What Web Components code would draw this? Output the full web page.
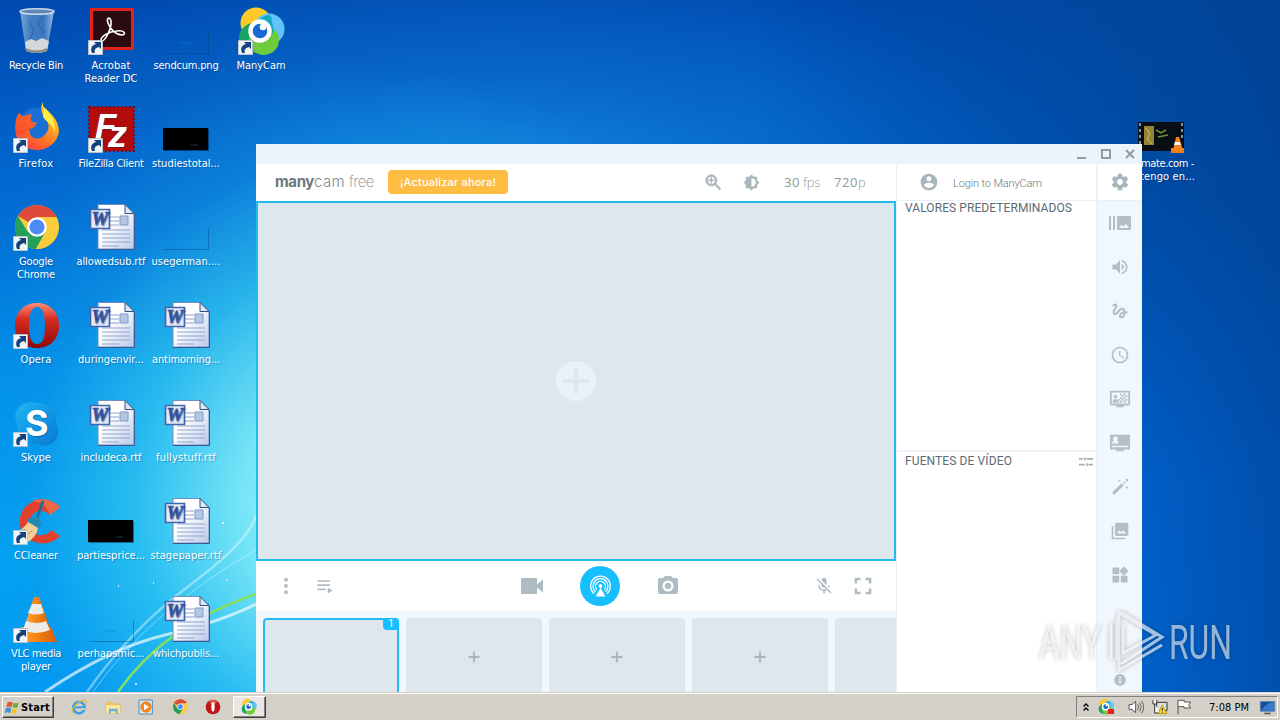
<!DOCTYPE html>
<html lang="es">
<head>
<meta charset="utf-8">
<title>ManyCam</title>
<style>
	body {
		margin: 0;
		width: 1280px;
		height: 720px;
		overflow: hidden;
		font: 11px "DejaVu Sans Condensed", "DejaVu Sans", sans-serif;
	}
</style>
</head>
<body>
<desk-top></desk-top>
<script>
const art = {
	recycle: `<defs><linearGradient id="g"><stop stop-color="#8fb5da"/><stop offset=".3" stop-color="#4f86c4"/><stop offset=".7" stop-color="#3f7cc4"/><stop offset="1" stop-color="#b4cfe8"/></linearGradient></defs>
		<path d="M8 3L14 43Q24 47 35 43L42 3Z" fill="url(#g)" opacity=".85"/>
		<path d="M13 34l6-3 5 2 6-3 7 3-2 10q-10 4-21 0z" fill="#d5d8da"/><path d="M14 40q10 5 21 0v3q-10 4-21 0z" fill="#8c8c87"/>
		<path d="M17 14l5 8-4 9M31 8l-5 9 6 7" stroke="#2f68b0" stroke-width="1.2" fill="none"/>
		<ellipse cx="25" cy="3.5" rx="17" ry="2.8" fill="#5c88b8" stroke="#cbd9e4" stroke-width="1.6"/>`,
	acrobat: `<path d="M3 0h44v42H3z" fill="#e2231a"/><path d="M6 3h38v36H6z" fill="#2b0a10"/>
		<path d="M14 33c4 1 11-13 10-20-1-5-5-3-3 2 2 6 8 12 14 12 5-1 2-5-5-4-6 0-17 5-16 10z" fill="none" stroke="#fff" stroke-width="1.600"/>`,
	manycam: `<circle cx="19" cy="15" r="15.5" fill="#ffca28"/><circle cx="32" cy="21" r="15.5" fill="#61c4fb"/><circle cx="17" cy="30" r="15" fill="#18a563"/><circle cx="27" cy="32" r="15" fill="#6ecb3e"/>
		<path d="M32 7a15 15 0 0 0-13 19l8 6 10-8-3-16z" fill="#16a9c4"/><circle cx="23" cy="23" r="9.5" fill="#1769d2" stroke="#fff" stroke-width="4.5"/><circle cx="26" cy="19" r="3.3" fill="#fff"/>`,
	firefox: `<defs><linearGradient id="g" x1=".2" y1="1" x2=".8" y2="0"><stop stop-color="#ff3b44"/><stop offset=".4" stop-color="#ff7b22"/><stop offset=".8" stop-color="#ffc52e"/><stop offset="1" stop-color="#ffe84a"/></linearGradient></defs>
		<circle cx="24" cy="20" r="18" fill="#1c6fd2"/><path d="M31 0c6 6 16 13 16 25a22 21 0 0 1-43 4C3 20 3 13 7 7l4 4c3-2 6-3 9-2-2 3-2 5 0 7l5 1-4 5-4 1c0 8 7 12 13 8 7-4 9-12 3-19-4-5-5-11-2-16z" fill="url(#g)"/><path d="M32 2c7 6 12 14 11 24-2-8-8-9-12-15z" fill="#fff143"/><path d="M7 7l4 4c3-2 6-3 9-2-2 3-2 5 0 7l5 1-4 5-4 1-4 6-9 0C3 20 3 13 7 7z" fill="#f8492d" opacity=".7"/>`,
	filezilla: `<path d="M2 1h45v44H2z" fill="#b30b0b" stroke="#7c0c1c" stroke-width="2" stroke-dasharray="2 2"/><text x="8" y="32" font-family="Liberation Sans" font-weight="bold" font-style="italic" font-size="35" fill="#fff">F</text><text x="21" y="41" font-family="Liberation Sans" font-weight="bold" font-style="italic" font-size="36" textLength="19" lengthAdjust="spacingAndGlyphs" fill="#fff">z</text>`,
	chrome: `<circle cx="25" cy="23" r="22" fill="#fbcd3a"/><path d="M25 23L5.9 12A22 22 0 0 1 44.1 12z" fill="#dd4b3c"/><path d="M25 13h19.5L41 8 25 1z" fill="#dd4b3c"/><path d="M5.9 12A22 22 0 0 0 24 45l9.5-17L16 28z" fill="#25a05b"/><path d="M33.5 28L24 45A22 22 0 0 0 44.1 13H25z" fill="#fbcd3a"/><circle cx="25" cy="23" r="8.7" fill="#4c8bf5" stroke="#fff" stroke-width="2.2"/>`,
	opera: `<defs><linearGradient id="g" x1="0" y1="0" x2="0" y2="1"><stop stop-color="#ff8d76"/><stop offset=".35" stop-color="#d92c22"/><stop offset="1" stop-color="#8d0806"/></linearGradient></defs><path fill-rule="evenodd" d="M25 1C11 1 3 11 3 24s9 22 22 22 22-9 22-22S39 1 25 1zm0 4c6 0 8 8 8 19s-2 18-8 18-8-7-8-18S19 5 25 5z" fill="url(#g)"/>`,
	skype: `<defs><linearGradient id="g" x2="1" y2="1"><stop stop-color="#20b6f5"/><stop offset="1" stop-color="#0878d2"/></linearGradient></defs><path d="M15 3c4-2 9 0 10 0 14 0 20 10 19 20 5 10 1 19-7 22-5 2-9 0-12-1-15 0-21-10-20-21C0 14 7 4 15 3z" fill="url(#g)"/><text x="13" y="36" font-family="Inter,Liberation Sans" font-weight="700" font-size="36" fill="#fff">S</text>`,
	ccleaner: `<path d="M48 9A23 22 0 1 0 48 38l-9-6a12 12 0 1 1-1-15z" fill="#e3412b"/><path d="M48 9c-7-7-18-10-28-6 8 0 14 4 18 14z" fill="#ee6748"/><path d="M31 3L25 20" stroke="#236d9c" stroke-width="3"/><path d="M16 21l9-3 5 7-4 6-10-4z" fill="#2589b6"/><path d="M16 24l10 6c-1 7-6 12-12 15L2 35c6-2 10-5 14-11z" fill="#f5cf94"/><path d="M7 35l6-4M12 40l8-7" stroke="#cb9054"/>`,
	vlc: `<defs><linearGradient id="g"><stop stop-color="#ffac42"/><stop offset=".5" stop-color="#f58312"/><stop offset="1" stop-color="#d85c05"/></linearGradient></defs><path d="M9 31h30l6 15H4z" fill="url(#g)"/><path d="M22 1h5l12 34q-14 7-28 0z" fill="url(#g)"/><path d="M20 8h9l3 9q-8 3-16 0zM14 25q11 4 20 0l4 9q-14 6-27 0z" fill="#ecebe8"/>`,
	word: `<defs><linearGradient id="g" x2="1" y2="1"><stop offset=".4" stop-color="#fff"/><stop offset="1" stop-color="#b9c9ea"/></linearGradient></defs><path d="M11 .5h27l9 9V45H11z" fill="url(#g)" stroke="#6f8dbf"/><path d="M38 .5v9h9z" fill="#dce6f5" stroke="#31527f"/><path d="M47.5 10v35.5H11" stroke="#3c5993" fill="none"/><path d="M23 13h9M23 17h9M23 21h9M15 26h28M15 30h28M15 34h28M15 38h28M15 42h17" stroke="#92a4cc"/><path d="M33 12h8v9h-8z" fill="#b4c6e2" stroke="#7d9cc6"/><path d="M3.5 5.5h19v19h-19z" fill="#e5ecf8" stroke="#4265ad" stroke-width="1.7"/><text x="4.5" y="21" font-family="Liberation Serif" font-weight="bold" font-style="italic" font-size="18" textLength="17" lengthAdjust="spacingAndGlyphs" fill="#3656a3" stroke="#3656a3" stroke-width=".6">W</text>`,
	black: `<path d="M1 22h45v22H1z" fill="#000"/><path d="M29 39h7" stroke="#123c50"/><path d="M2 44.5h44.5V23" stroke="#0006" fill="none"/>`,
	clear: `<path d="M2 45.5h44.5V24" stroke="#003b7066" fill="none"/><path d="M18 35h11" stroke="#0088c8" opacity=".6"/>`,
	film: `<path d="M1 16h46v29H1z" fill="#080e12"/><path d="M7 20h10v19H7z" fill="#918437"/><path d="M9 22l4 6-3 5 5 5" stroke="#d4bf58" fill="none"/><path d="M19 24l5 3 5-3M21 31l10-2" stroke="#718e35" stroke-width="1.5" fill="none"/><path d="M3 17v27M45 17v15" stroke="#7894aa" stroke-width="2" stroke-dasharray="3 3"/><path d="M34 42h13v5H34z" fill="#ef7d16"/><path d="M39 31h3l4 13H36z" fill="#f48620"/><path d="M38 36h5l1 3h-7z" fill="#fff"/>`,
	ie: `<ellipse cx="24" cy="26" rx="17" ry="17" fill="none" stroke="#3a9ee5" stroke-width="8"/><path d="M9 25h30" stroke="#3a9ee5" stroke-width="6"/><path d="M30 30h15" stroke="#d4d0c8" stroke-width="5"/><path d="M5 43C-5 33 27 0 43 5c5 3 2 10-1 14" fill="none" stroke="#e9b932" stroke-width="4"/>`,
	folder: `<path d="M4 8h15l4 5h19v13H4z" fill="#edc45b"/><path d="M2 17h44v26H2z" fill="#ffe79c" stroke="#cb9d37"/><path d="M12 43V29h26v14h-6v-6H18v6z" fill="#62b3dc"/>`,
	media: `<path d="M3 3h40v42H3z" fill="#d9edf7" stroke="#4b8cba" stroke-width="3"/><circle cx="24" cy="24" r="17" fill="#f4861b"/><path d="M18 14l15 10-15 10z" fill="#fff"/>`,
	operaSmall: `<circle cx="24" cy="24" r="22" fill="#bd1518"/><path d="M12 7q12-8 25 0l-6 8H17z" fill="#e15b4d"/><ellipse cx="24" cy="24" rx="5" ry="14" fill="#fff"/>`,
	windows: `<path d="M8 8q9-5 17 0l-4 15q-8-4-17 0z" fill="#e75720"/><path d="M28 9q8 4 16-1l-4 15q-8 4-16 0z" fill="#65ae3d"/><path d="M3 26q8-4 17 1l-4 15q-8-5-17 0z" fill="#3c8fda"/><path d="M23 27q9 4 16 0l-4 15q-8 4-16-1z" fill="#f6c42e"/>`,
	speaker: `<path d="M3 17h9L23 7v34L12 31H3z" fill="#fff" stroke="#555" stroke-width="3"/><path d="M29 16q6 8 0 17M35 11q9 13 0 27M41 6q12 18 0 37" fill="none" stroke="#666" stroke-width="3"/>`,
	network: `<path d="M14 10h31v25H14z" fill="#dce1e5" stroke="#333" stroke-width="3"/><path d="M3 3v12h11V3M8 15v27h18" fill="#fff" stroke="#333" stroke-width="3"/><path d="M31 18l14 26H18z" fill="#ffd92b" stroke="#9b7b00" stroke-width="2"/><path d="M31 27v8M31 38v3" stroke="#222" stroke-width="3"/>`,
	flag: `<path d="M6 46V4h19v5h19l-6 9 6 9H24v-4H6" fill="#fff" stroke="#555" stroke-width="3"/>`,
	screen: `<path d="M1 5h46v31H1z" fill="#174da0" stroke="#6088b2" stroke-width="3"/><path d="M3 34Q22 7 45 8v26z" fill="#3979cf"/><path d="M14 43h20" stroke="#555" stroke-width="5"/>`
};

const glyphs = {
	zoom: `<path d="M15.5 14h-.79l-.28-.27C15.41 12.59 16 11.11 16 9.5 16 5.91 13.09 3 9.5 3S3 5.91 3 9.5 5.91 16 9.5 16c1.61 0 3.09-.59 4.23-1.57l.27.28v.79l5 4.99L20.49 19zm-6 0C7.01 14 5 11.99 5 9.5S7.01 5 9.5 5 14 7.01 14 9.5 11.99 14 9.5 14z" stroke="currentColor" stroke-width=".6"/><path d="M13 10.3h-2.7V13H8.7v-2.7H6V8.7h2.7V6h1.6v2.7H13z"/>`,
	bright: `<path d="M20 15.31L23.31 12 20 8.69V4h-4.69L12 .69 8.69 4H4v4.69L.69 12 4 15.31V20h4.69L12 23.31 15.31 20H20zM12 18V6c3.31 0 6 2.69 6 6s-2.69 6-6 6z"/>`,
	account: `<path d="M12 2C6.48 2 2 6.48 2 12s4.48 10 10 10 10-4.48 10-10S17.52 2 12 2zm0 3c1.66 0 3 1.34 3 3s-1.34 3-3 3-3-1.34-3-3 1.34-3 3-3zm0 14.2c-2.5 0-4.71-1.28-6-3.22.03-1.99 4-3.08 6-3.08 1.99 0 5.97 1.09 6 3.08-1.29 1.94-3.5 3.22-6 3.22z"/>`,
	gear: `<path d="M19.43 12.98c.04-.32.07-.64.07-.98s-.03-.66-.07-.98l2.11-1.65c.19-.15.24-.42.12-.64l-2-3.46c-.12-.22-.39-.3-.61-.22l-2.49 1c-.52-.4-1.08-.73-1.69-.98l-.38-2.65C14.46 2.18 14.25 2 14 2h-4c-.25 0-.46.18-.49.42l-.38 2.65c-.61.25-1.17.59-1.69.98l-2.49-1c-.23-.09-.49 0-.61.22l-2 3.46c-.13.22-.07.49.12.64l2.11 1.65c-.04.32-.07.65-.07.98s.03.66.07.98l-2.11 1.65c-.19.15-.24.42-.12.64l2 3.46c.12.22.39.3.61.22l2.49-1c.52.4 1.08.73 1.69.98l.38 2.65c.03.24.24.42.49.42h4c.25 0 .46-.18.49-.42l.38-2.65c.61-.25 1.17-.59 1.69-.98l2.49 1c.23.09.49 0 .61-.22l2-3.46c.12-.22.07-.49-.12-.64zM12 15.5c-1.93 0-3.5-1.57-3.5-3.5s1.57-3.5 3.5-3.5 3.5 1.57 3.5 3.5-1.57 3.5-3.5 3.5z"/>`,
	burst: `<path d="M1 5h2v14H1zM5 5h2v14H5zM10 5h12q1 0 1 1v12q0 1-1 1H10q-1 0-1-1V6q0-1 1-1zm1 12h10l-3.2-4.3-2.5 3.1-1.7-2.1z" fill-rule="evenodd"/>`,
	volume: `<path d="M3 9v6h4l5 5V4L7 9zm13.5 3c0-1.77-1.02-3.29-2.5-4.03v8.05c1.48-.73 2.5-2.25 2.5-4.02zM14 3.23v2.06c2.89.86 5 3.54 5 6.71s-2.11 5.85-5 6.71v2.06c4.01-.91 7-4.49 7-8.77s-2.99-7.86-7-8.77z"/>`,
	gesture: `<path d="M4.59 6.89c.7-.71 1.4-1.35 1.71-1.22.5.2 0 1.03-.3 1.52-.25.42-2.86 3.89-2.86 6.31 0 1.28.48 2.34 1.34 2.98.75.56 1.74.73 2.64.46 1.07-.31 1.95-1.4 3.06-2.77 1.21-1.49 2.83-3.44 4.08-3.44 1.63 0 1.65 1.01 1.76 1.79-3.78.64-5.38 3.67-5.38 5.37 0 1.7 1.44 3.09 3.21 3.09 1.63 0 4.29-1.33 4.69-6.1H21v-2.5h-2.47c-.15-1.65-1.09-4.2-4.03-4.2-2.25 0-4.18 1.91-4.94 2.84-.58.73-2.06 2.48-2.29 2.72-.25.3-.68.84-1.11.84-.45 0-.72-.83-.36-1.92.35-1.09 1.4-2.86 1.85-3.52.78-1.14 1.3-1.92 1.3-3.28C8.95 3.69 7.31 3 6.44 3 5.12 3 3.97 4 3.72 4.25c-.36.36-.66.66-.88.93zm9.29 11.66c-.31 0-.74-.26-.74-.72 0-.6.73-2.2 2.87-2.76-.3 2.69-1.43 3.48-2.13 3.48z"/>`,
	clock: `<path d="M11.99 2C6.47 2 2 6.48 2 12s4.47 10 9.99 10C17.52 22 22 17.52 22 12S17.52 2 11.99 2zM12 20c-4.42 0-8-3.58-8-8s3.58-8 8-8 8 3.58 8 8-3.58 8-8 8zm.5-13H11v6l5.25 3.15.75-1.23-4.5-2.67z"/>`,
	chroma: `<path fill-rule="evenodd" d="M2 3h20q1 0 1 1v14q0 1-1 1h-6v2H8v-2H2q-1 0-1-1V4q0-1 1-1zm1 2v12h18V5z"/><circle cx="7" cy="9.5" r="1.9"/><path d="M4 16q0-4 3-4t4 4zM12 6h2v2h-2zM16 6h2v2h-2zM14 8h2v2h-2zM18 8h2v2h-2zM12 10h2v2h-2zM16 10h2v2h-2zM10 12h2v2h-2zM14 12h2v2h-2zM18 12h2v2h-2zM12 14h2v2h-2zM16 14h2v2h-2z"/>`,
	lower: `<path fill-rule="evenodd" d="M2 3h20q1 0 1 1v14q0 1-1 1h-6v2H8v-2H2q-1 0-1-1V4q0-1 1-1zm1.5 9.5h7c0-2-1-3-2-3.3a2.5 2.5 0 1 0-3 0c-1 .3-2 1.300-2 3.300zM3 15v1.500h18V15z"/>`,
	wand: `<path d="M2.500 18.500L14 7.500l2.500 2.500L5 21.500zM15.700 6.300l1-1 2 2-1 1zM19 2h3v3h-3zM11.500 3l1.500 1.500L11.500 6 10 4.500zM20.500 11l1.500 1.500-1.500 1.500-1.500-1.500z"/>`,
	library: `<path d="M22 16V4c0-1.100-.9-2-2-2H8c-1.100 0-2 .9-2 2v12c0 1.100.9 2 2 2h12c1.100 0 2-.9 2-2zm-13.500-1l2.800-4 2.200 2.300L16 11l3.500 4zM2 6v14c0 1.100.9 2 2 2h14v-2H4V6z"/>`,
	widgets: `<path d="M13 13v8h8v-8zM3 21h8v-8H3zM3 3v8h8V3zm13.660-1.310L11 7.340 16.660 13l5.660-5.660z"/>`,
	info: `<path d="M12 2C6.480 2 2 6.480 2 12s4.480 10 10 10 10-4.480 10-10S17.520 2 12 2zm2 15.500h-4v-1.500h1v-4h-1v-1.500h3.200V16H14zm-.5-8.500h-3V6h3z"/>`,
	more: `<circle cx="12" cy="4.500" r="2.300"/><circle cx="12" cy="12" r="2.300"/><circle cx="12" cy="19.500" r="2.300"/>`,
	playlist: `<path d="M4 5h15v2H4zM4 10h15v2H4zM4 15h10v2H4zM16.500 14v7l6-3.500z"/>`,
	video: `<path d="M17 10.500V5c0-.55-.45-1-1-1H2c-.55 0-1 .45-1 1v14c0 .55.45 1 1 1h14c.55 0 1-.45 1-1v-5.500l6 5v-13z"/>`,
	camera: `<path fill-rule="evenodd" d="M9 2L7.170 4H4c-1.100 0-2 .9-2 2v12c0 1.100.9 2 2 2h16c1.100 0 2-.9 2-2V6c0-1.100-.9-2-2-2h-3.170L15 2zm3 15.500a5.500 5.500 0 1 1 0-11 5.500 5.500 0 0 1 0 11zm0-2.300a3.200 3.200 0 1 0 0-6.400 3.200 3.200 0 0 0 0 6.400z"/>`,
	mic: `<path d="M19 11h-1.700c0 .74-.16 1.430-.43 2.050l1.230 1.230c.56-.98.9-2.090.9-3.280zm-4.020.17c0-.06.02-.11.02-.17V5c0-1.660-1.340-3-3-3S9 3.340 9 5v.18zM4.270 3L3 4.270l6.010 6.010V11c0 1.660 1.330 3 2.990 3 .22 0 .44-.03.65-.08l1.660 1.660c-.71.33-1.500.52-2.310.52-2.760 0-5.300-2.100-5.300-5.100H5c0 3.410 2.720 6.230 6 6.720V21h2v-3.280c.91-.13 1.770-.45 2.540-.9L19.730 21 21 19.730z"/>`,
	full: `<path d="M2 2h7v3H5v4H2zM15 2h7v7h-3V5h-4zM2 15h3v4h4v3H2zM19 15h3v7h-7v-3h4z"/>`,
	air: `<path d="M12 13l5 9.500H7z"/><circle cx="12" cy="11.500" r="2"/><path d="M8 15.200a5.200 5.200 0 1 1 8 0" fill="none" stroke="#fff" stroke-width="1.400"/><path d="M5.500 19.500a10.300 10.300 0 1 1 13 0M6.800 17.500a7.800 7.800 0 1 1 10.400 0" fill="none" stroke="#fff" stroke-width="1.300"/>`,
	plus: `<path d="M11 4h2v7h7v2h-7v7h-2v-7H4v-2h7z" stroke="currentColor" stroke-width=".5"/>`,
	sort: `<path d="M0 5h6v3H0zM7 6.500L11.500 3v7zM13 5h11v3H13zM0 15h10v3H0zM12.500 13l4.500 3.500-4.500 3.500zM17 15h7v3h-7z"/>`
};

class FitText extends HTMLElement {
	constructor(){
		super();
		this.attachShadow({mode:"open"});
		this.shadowRoot.innerHTML = `<style>:host { display: inline-block; } span { display: inline-block; white-space: pre; }</style><span><slot></slot></span>`;
	}

	// spread the letters until the line is w pixels wide
	connectedCallback(){
		const w = +this.getAttribute("w");
		const span = this.shadowRoot.querySelector("span");
		const n = this.textContent.length;
		const natural = span.getBoundingClientRect().width;
		span.style.letterSpacing = `${(w-natural)/n}px`;
	}
}

class PicIcon extends HTMLElement {
	constructor(){
		super();
		this.attachShadow({mode:"open"});
	}

	connectedCallback(){
		const size = this.getAttribute("size") || 20;
		const pic = art[this.getAttribute("name")];
		this.shadowRoot.innerHTML = `
			<style>
				:host { display: block; flex: none; width: ${size}px; height: ${size}px; }
				svg { display: block; overflow: visible; fill: currentColor; }
			</style>
			<svg width="${size}" height="${size}" viewBox="0 0 ${pic ? "48 48" : "24 24"}">
				${pic || glyphs[this.getAttribute("name")]}
				${this.hasAttribute("shortcut") ? `<path d="M1.500 32.500h14v14h-14z" fill="#f2f5f8" stroke="#b9c3cc"/><path d="M5 45c-2-5 0-8 4-9l-2-2h7v7l-2-2c-4 1-5 3-4 6z" fill="#15427d"/>` : ""}
			</svg>
		`;
	}
}

class DesktopIcon extends HTMLElement {
	constructor(){
		super();
		this.attachShadow({mode:"open"});
	}

	connectedCallback(){
		this.shadowRoot.innerHTML = `
			<style>
				:host {
					display: flex;
					flex-direction: column;
					align-items: center;
					box-sizing: border-box;
					padding-top: 8px;
					width: 75px;
					color: #fff;
					line-height: 13px;
					text-shadow: 1px 1px 1px #00306460;
				}
				pic-icon { margin-bottom: 3px; }
				::slotted(fit-text) { padding-left: 1px; }
			</style>
			<pic-icon name="${this.getAttribute("icon")}" size="48" ${this.hasAttribute("shortcut") ? "shortcut" : ""}></pic-icon>
			<slot></slot>
		`;
	}
}

class CamHeader extends HTMLElement {
	constructor(){
		super();
		this.attachShadow({mode:"open"});
		this.shadowRoot.innerHTML = `
			<style>
				:host {
					display: flex;
					align-items: center;
					height: 37px;
					padding-left: 19px;
					box-sizing: border-box;
					color: #8d9a9e;
				}
				.logo { font: 15px/20px Inter, sans-serif; width: 113px; color: #7f8b90; display: flex; padding-bottom: 2px; }
				.logo b { color: #6a787d; }
				.logo .cam { font-weight: 300; }
				.logo .free { font-weight: 200; margin-left: 4px; }
				.buy {
					display: flex;
					align-items: center;
					justify-content: center;
					box-sizing: border-box;
					width: 120px;
					height: 24px;
					margin: -1px auto 0 0;
					border-radius: 4px;
					background: #fdbc42;
					color: #fff;
					font: 500 11px Inter, sans-serif;
				}
				pic-icon { color: #aab7bc; }
				.rate { font: 300 13px "Open Sans", sans-serif; margin-top: -1px; }
			</style>
			<div class="logo"><b><fit-text w="39">many</fit-text></b><fit-text class="cam" w="31">cam</fit-text><fit-text class="free" w="25">free</fit-text></div>
			<div class="buy"><fit-text w="96">¡Actualizar ahora!</fit-text></div>
			<pic-icon name="zoom" size="21" style="margin-right:19px"></pic-icon>
			<pic-icon name="bright" size="17" style="margin-right:24px"></pic-icon>
			<div class="rate" style="margin-right:14px"><b><fit-text w="16">30</fit-text></b><fit-text w="20"> fps</fit-text></div>
			<div class="rate" style="margin-right:30px"><b><fit-text w="24">720</fit-text></b><fit-text w="8">p</fit-text></div>
		`;
	}
}

class CamControls extends HTMLElement {
	constructor(){
		super();
		this.attachShadow({mode:"open"});
		this.shadowRoot.innerHTML = `
			<style>
				:host {
					display: flex;
					align-items: center;
					height: 50px;
					box-sizing: border-box;
					padding: 0 23px 0 20px;
					color: #afbdc3;
				}
				.air {
					display: grid;
					place-items: center;
					width: 40px;
					height: 40px;
					margin: 0 36px;
					border-radius: 50%;
					background: #18bfff;
					color: #fff;
				}
			</style>
			<pic-icon name="more" size="20"></pic-icon>
			<pic-icon name="playlist" size="20" style="margin:0 auto 0 18px"></pic-icon>
			<pic-icon name="video" size="24"></pic-icon>
			<div class="air"><pic-icon name="air" size="23"></pic-icon></div>
			<pic-icon name="camera" size="24" style="margin-right:134px"></pic-icon>
			<pic-icon name="mic" size="20" style="margin-right:19px"></pic-icon>
			<pic-icon name="full" size="20"></pic-icon>
		`;
	}
}

class CamScene extends HTMLElement {
	constructor(){
		super();
		this.attachShadow({mode:"open"});
		this.shadowRoot.innerHTML = `
			<style>
				:host {
					display: grid;
					place-items: center;
					position: relative;
					flex: none;
					box-sizing: border-box;
					width: 136px;
					height: 78px;
					border-radius: 4px;
					background: #dfe7ee;
					color: #9eadb4;
				}
				:host([live]) { border: 2px solid #25b9f1; border-bottom: 0; }
				::slotted(span) {
					position: absolute;
					top: -2px;
					right: -2px;
					width: 16px;
					height: 12px;
					border-radius: 0 4px 0 4px;
					background: #18bfff;
					color: #fff;
					font: 10px/12px Roboto, sans-serif;
					text-align: center;
				}
			</style>
			<slot></slot>
		`;
	}
}

class CamWindow extends HTMLElement {
	constructor(){
		super();
		this.attachShadow({mode:"open"});
		this.shadowRoot.innerHTML = `
			<style>
				:host {
					display: flex;
					flex-direction: column;
					position: absolute;
					left: 256px;
					top: 144px;
					width: 886px;
					height: 548px;
					overflow: hidden;
					background: #fff;
				}
				.title {
					display: flex;
					align-items: center;
					justify-content: flex-end;
					gap: 14px;
					flex: none;
					height: 20px;
					padding-right: 7px;
					background: #ecf4fb;
				}
				.title svg { display: block; fill: none; stroke: #8c9da4; stroke-width: 2; }
				.body { display: grid; grid-template-columns: 640px 200px 46px; flex: 1; min-height: 0; }
				.left { display: flex; flex-direction: column; min-height: 0; min-width: 0; }
				.preview {
					display: grid;
					place-items: center;
					flex: none;
					box-sizing: border-box;
					height: 360px;
					border: 2px solid #22bbea;
					background: #dfe7ee;
				}
				.add { display: grid; place-items: center; width: 40px; height: 40px; border-radius: 50%; background: #e9f0f7; }
				.add svg { display: block; stroke: #dee7ee; stroke-width: 4; }
				.scenes { display: flex; gap: 7px; flex: 1; padding: 7px 0 0 7px; overflow: hidden; background: #f1f8fd; }
				.middle { display: flex; flex-direction: column; border-left: 1px solid #eaf1f6; }
				.login {
					display: flex;
					align-items: center;
					gap: 14px;
					flex: none;
					height: 36px;
					padding-left: 22px;
					border-bottom: 1px solid #e8f0f6;
					color: #a8b5ba;
				}
				.login fit-text { font: 300 11px Roboto, sans-serif; color: #707a80; padding-top: 2px; }
				.panel {
					display: flex;
					justify-content: space-between;
					align-items: flex-start;
					flex: 1;
					padding: 0 3px 0 8px;
					color: #5d6b74;
					font: 12px/14px Roboto, sans-serif;
				}
				.panel.presets { flex: none; height: 249px; border-bottom: 2px solid #edf3f8; }
				.panel.sources { padding-top: 2px; }
				.side { display: flex; flex-direction: column; align-items: center; padding-left: 1px; background: #f0f7fd; color: #b3bfc4; border-left: 1px solid #eaf1f6; }
				.side div { display: grid; place-items: center; flex: none; width: 44px; height: 44px; }
				.side .settings { height: 36px; background: #fff; border-bottom: 1px solid #e8f0f6; color: #a8b5ba; }
				.side .info { margin-top: auto; height: 24px; }
			</style>
			<div class="title">
				<svg width="10" height="10"><path d="M0 9h9"/></svg>
				<svg width="10" height="10"><path d="M1 1h8v8H1z"/></svg>
				<svg width="10" height="10"><path d="M1 1l8 8M9 1l-8 8"/></svg>
			</div>
			<div class="body">
				<div class="left">
					<cam-header></cam-header>
					<div class="preview"><div class="add"><svg width="26" height="26"><path d="M0 13h26M13 0v26"/></svg></div></div>
					<cam-controls></cam-controls>
					<div class="scenes">
						<cam-scene live><span>1</span></cam-scene>
						<cam-scene><pic-icon name="plus" size="16"></pic-icon></cam-scene>
						<cam-scene><pic-icon name="plus" size="16"></pic-icon></cam-scene>
						<cam-scene><pic-icon name="plus" size="16"></pic-icon></cam-scene>
						<cam-scene></cam-scene>
					</div>
				</div>
				<div class="middle">
					<div class="login"><pic-icon name="account" size="20"></pic-icon><fit-text w="89">Login to ManyCam</fit-text></div>
					<div class="panel presets"><fit-text w="167">VALORES PREDETERMINADOS</fit-text></div>
					<div class="panel sources"><fit-text w="107">FUENTES DE VÍDEO</fit-text><pic-icon name="sort" size="14" style="color:#a3afb4;margin-top:1px"></pic-icon></div>
				</div>
				<div class="side">
					<div class="settings"><pic-icon name="gear" size="20"></pic-icon></div>
					${["burst,24","volume,20","gesture,20","clock,20","chroma,22","lower,22","wand,20","library,20","widgets,20"].map(s=>s.split(",")).map(([name,size])=>`<div><pic-icon name="${name}" size="${size}"></pic-icon></div>`).join("")}
					<div class="info"><pic-icon name="info" size="14"></pic-icon></div>
				</div>
			</div>
		`;
	}
}

class TaskBar extends HTMLElement {
	constructor(){
		super();
		this.attachShadow({mode:"open"});
		this.shadowRoot.innerHTML = `
			<style>
				:host {
					display: flex;
					align-items: center;
					position: absolute;
					left: 0;
					bottom: 0;
					width: 1280px;
					height: 28px;
					box-sizing: border-box;
					padding: 2px 2px 0;
					background: #d4d0c8;
					box-shadow: inset 0 1px #d4d0c8, inset 0 2px #fff;
					color: #000;
				}
				.button {
					display: flex;
					align-items: center;
					box-sizing: border-box;
					height: 22px;
					border: 1px solid;
					border-color: #fff #404040 #404040 #fff;
					box-shadow: inset -1px -1px #808080;
				}
				.start { width: 52px; padding-left: 2px; gap: 1px; font-weight: bold; margin-right: 17px; }
				.quick { display: flex; gap: 17.600px; margin-right: 12px; }
				.task { width: 33px; justify-content: center; background: #e9e7e3; }
				.task pic-icon { margin-right: 2px; }
				.tray {
					display: flex;
					align-items: center;
					box-sizing: border-box;
					width: 202px;
					height: 22px;
					margin-left: auto;
					border: 1px solid;
					border-color: #808080 #fff #fff #808080;
					padding-left: 6px;
				}
				.cam { position: relative; margin: 0 14px 0 9px; }
				.cam::after { content: ""; position: absolute; right: 0; bottom: 1px; width: 6px; height: 5px; background: #ed1c24; }
			</style>
			<div class="button start"><pic-icon name="windows" size="15"></pic-icon><fit-text w="29">Start</fit-text></div>
			<div class="quick">
				<pic-icon name="ie" size="16"></pic-icon>
				<pic-icon name="folder" size="16"></pic-icon>
				<pic-icon name="media" size="16"></pic-icon>
				<pic-icon name="chrome" size="16"></pic-icon>
				<pic-icon name="operaSmall" size="16"></pic-icon>
			</div>
			<div class="button task"><pic-icon name="manycam" size="16"></pic-icon></div>
			<div class="tray">
				<svg width="6" height="8" fill="none" stroke="#000" stroke-width="1.400"><path d="M.5 3.500L3 1l2.500 2.500M.5 7.500L3 5l2.500 2.500"/></svg>
				<div class="cam"><pic-icon name="manycam" size="16"></pic-icon></div>
				<pic-icon name="speaker" size="16" style="margin-right:8px"></pic-icon>
				<pic-icon name="network" size="16" style="margin-right:8px"></pic-icon>
				<pic-icon name="flag" size="16" style="margin-right:17px"></pic-icon>
				<fit-text w="40">7:08 PM</fit-text>
				<pic-icon name="screen" size="15" style="margin-left:11px"></pic-icon>
			</div>
		`;
	}
}

class WaterMark extends HTMLElement {
	constructor(){
		super();
		this.attachShadow({mode:"open"});
		this.shadowRoot.innerHTML = `
			<style>
				:host { display: block; position: absolute; left: 1030px; top: 605px; }
				svg { display: block; filter: drop-shadow(0 0 2px #0006); }
				text { font: 49px/1 Roboto, sans-serif; }
			</style>
			<svg width="220" height="74" fill="#fff" fill-opacity=".58">
				<text x="9" y="54" textLength="62" lengthAdjust="spacingAndGlyphs">ANY</text>
				<text x="139" y="54" textLength="63" lengthAdjust="spacingAndGlyphs">RUN</text>
				<path d="M81 18v36M87 12v43M91 7l41 25-41 27M93 20v28l33-18-37-22v57l43-25" fill="none" stroke="#fff" stroke-opacity=".65" stroke-width="3"/>
			</svg>
		`;
	}
}

const icons = [
	["recycle",0,"Recycle Bin,54"], ["firefox",1,"Firefox,35"], ["chrome",1,"Google,34","Chrome,38"], ["opera",1,"Opera,31"], ["skype",1,"Skype,30"], ["ccleaner",1,"CCleaner,44"], ["vlc",1,"VLC media,50","player,30"],
	["acrobat",1,"Acrobat,39","Reader DC,53"], ["filezilla",1,"FileZilla Client,65"], ["word",0,"allowedsub.rtf,69"], ["word",0,"duringenvir...,66"], ["word",0,"includeca.rtf,61"], ["black",0,"partiesprice...,68"], ["clear",0,"perhapsmic...,67"],
	["clear",0,"sendcum.png,65"], ["black",0,"studiestotal...,68"], ["clear",0,"usegerman....,69"], ["word",0,"antimorning...,68"], ["word",0,"fullystuff.rtf,60"], ["word",0,"stagepaper.rtf,71"], ["word",0,"whichpublis...,66"],
	["manycam",1,"ManyCam,49"]
];

class DeskTop extends HTMLElement {
	constructor(){
		super();
		this.attachShadow({mode:"open"});
		this.shadowRoot.innerHTML = `
			<style>
				:host {
					display: block;
					position: relative;
					width: 1280px;
					height: 720px;
					overflow: hidden;
					background:
						radial-gradient(ellipse 420px 440px at 360px 500px, #b8fbfb, #7eeaf7ee 28%, #35c8f0b8 54%, #129ce658 78%, #0a80d800),
						radial-gradient(ellipse 560px 260px at 500px 200px, #1d93e4c0, #1280d860 50%, #0a70d000),
						linear-gradient(#004ab0, #0067d0 190px, #008fea 380px, #00a2f4 560px, #0098f5 700px);
				}
				/* the wallpaper gets darker towards the right edge */
				.shade {
					position: absolute;
					left: 760px;
					top: 0;
					width: 520px;
					height: 692px;
					background: linear-gradient(to right, #003f8f00 72%, #003f8f80), linear-gradient(#00479c, #004ca6 200px, #005fc8 480px, #0062cc);
					-webkit-mask: linear-gradient(to right, #0000, #000 73%);
					mask: linear-gradient(to right, #0000, #000 73%);
				}
				.streaks { position: absolute; left: 0; top: 480px; }
				.grid {
					display: grid;
					grid-template-rows: repeat(7, 98px);
					grid-auto-columns: 75px;
					grid-auto-flow: column;
					position: relative;
					margin-left: -2px;
					width: 300px;
				}
				.movie { position: absolute; left: 1123px; top: 98px; }
				.movie fit-text { margin-left: 13px; }
			</style>
			<div class="shade"></div>
			<svg class="streaks" width="256" height="212" fill="none" stroke="#fff">
				<path d="M45 212Q110 168 165 155T256 124" stroke-width="3" opacity=".65"/>
				<path d="M87 212Q130 150 190 105T256 35" stroke-width="2.500" opacity=".4"/>
				<path d="M93 212Q150 130 256 70" opacity=".4"/>
				<path d="M118 212Q165 145 256 114" stroke="#86df62" stroke-width="2.500"/>
				<path d="M118 106h1M153 103h1M226 100h1M135 204h2M222 43h2" stroke-width="2" opacity=".7"/>
			</svg>
			<div class="grid">${icons.map(([icon,shortcut,...lines])=>`
				<desktop-icon icon="${icon}" ${shortcut ? "shortcut" : ""}>${lines.map(l=>l.split(",")).map(([text,w])=>`<fit-text w="${w}">${text}</fit-text>`).join("")}</desktop-icon>`).join("")}
			</div>
			<desktop-icon class="movie" icon="film"><fit-text w="53">mate.com -</fit-text><fit-text w="55">tengo en...</fit-text></desktop-icon>
			<cam-window></cam-window>
			<water-mark></water-mark>
			<task-bar></task-bar>
		`;
	}
}

customElements.define("fit-text",FitText);
customElements.define("pic-icon",PicIcon);
customElements.define("desktop-icon",DesktopIcon);
customElements.define("cam-header",CamHeader);
customElements.define("cam-controls",CamControls);
customElements.define("cam-scene",CamScene);
customElements.define("cam-window",CamWindow);
customElements.define("task-bar",TaskBar);
customElements.define("water-mark",WaterMark);
customElements.define("desk-top",DeskTop);
</script>
</body>
</html>
